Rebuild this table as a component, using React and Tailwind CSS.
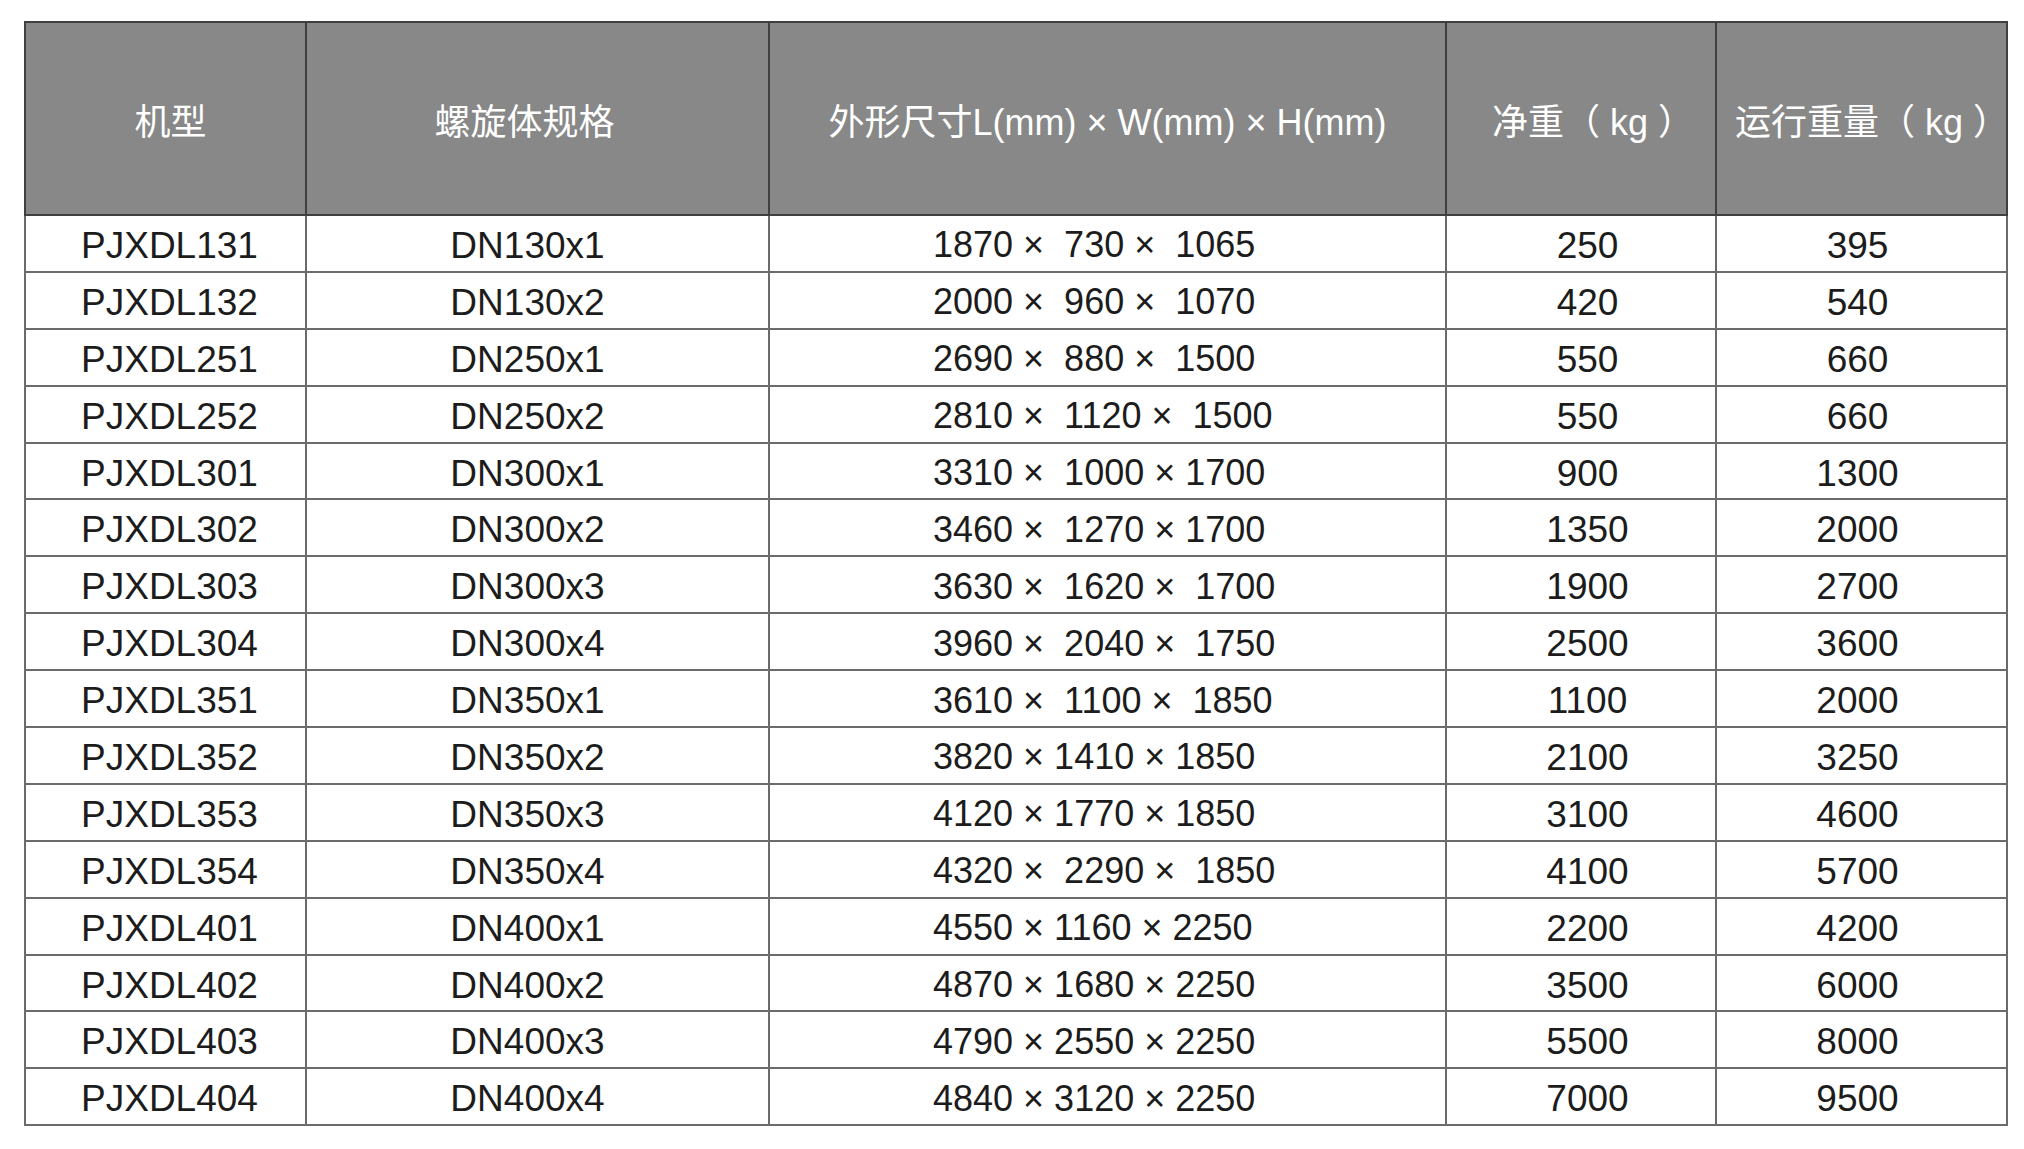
const rows = [
  ['PJXDL131', 'DN130x1', '1870 ×  730 ×  1065', '250', '395'],
  ['PJXDL132', 'DN130x2', '2000 ×  960 ×  1070', '420', '540'],
  ['PJXDL251', 'DN250x1', '2690 ×  880 ×  1500', '550', '660'],
  ['PJXDL252', 'DN250x2', '2810 ×  1120 ×  1500', '550', '660'],
  ['PJXDL301', 'DN300x1', '3310 ×  1000 × 1700', '900', '1300'],
  ['PJXDL302', 'DN300x2', '3460 ×  1270 × 1700', '1350', '2000'],
  ['PJXDL303', 'DN300x3', '3630 ×  1620 ×  1700', '1900', '2700'],
  ['PJXDL304', 'DN300x4', '3960 ×  2040 ×  1750', '2500', '3600'],
  ['PJXDL351', 'DN350x1', '3610 ×  1100 ×  1850', '1100', '2000'],
  ['PJXDL352', 'DN350x2', '3820 × 1410 × 1850', '2100', '3250'],
  ['PJXDL353', 'DN350x3', '4120 × 1770 × 1850', '3100', '4600'],
  ['PJXDL354', 'DN350x4', '4320 ×  2290 ×  1850', '4100', '5700'],
  ['PJXDL401', 'DN400x1', '4550 × 1160 × 2250', '2200', '4200'],
  ['PJXDL402', 'DN400x2', '4870 × 1680 × 2250', '3500', '6000'],
  ['PJXDL403', 'DN400x3', '4790 × 2550 × 2250', '5500', '8000'],
  ['PJXDL404', 'DN400x4', '4840 × 3120 × 2250', '7000', '9500'],
];

const App = () => {
  return (
    <div className="min-h-[1149px] bg-white pt-[21px] pl-[24px] font-['Liberation_Sans','Noto_Sans_CJK_SC',sans-serif]">
      <table className="table-fixed border-collapse w-[1982px]">
        <colgroup>
          <col className="w-[281px]" />
          <col className="w-[463px]" />
          <col className="w-[677px]" />
          <col className="w-[270px]" />
          <col className="w-[291px]" />
        </colgroup>
        <thead>
          <tr className="h-[193px] bg-[#878887] text-white text-[36px]">
            <th className="border-2 border-[#3f3f3f] font-normal pt-2 pl-[10px]">机型</th>
            <th className="border-2 border-[#3f3f3f] font-normal pt-2 pr-[26px]">螺旋体规格</th>
            <th className="border-2 border-[#3f3f3f] font-normal pt-2 whitespace-nowrap">
              外形尺寸L(mm) × W(mm) × H(mm)
            </th>
            <th className="border-2 border-[#3f3f3f] font-normal pt-2 pl-[24px] whitespace-pre">净重（ kg ）</th>
            <th className="border-2 border-[#3f3f3f] font-normal pt-2 pl-[18px] whitespace-pre">运行重量（ kg ）</th>
          </tr>
        </thead>
        <tbody>
          {rows.map((r) => (
            <tr key={r[0]} className="h-[56.9px] text-[#1c1c1c] leading-none">
              <td className="border-2 border-[#6b6b6b] text-center text-[37px] pt-1 pl-[8px]">{r[0]}</td>
              <td className="border-2 border-[#6b6b6b] text-center text-[37px] pt-1 pr-[20px]">{r[1]}</td>
              <td className="border-2 border-[#6b6b6b] text-[36px] pl-[163px] pt-1 whitespace-pre">{r[2]}</td>
              <td className="border-2 border-[#6b6b6b] text-center text-[37px] pt-1 pl-[13px]">{r[3]}</td>
              <td className="border-2 border-[#6b6b6b] text-center text-[37px] pt-1 pr-[8px]">{r[4]}</td>
            </tr>
          ))}
        </tbody>
      </table>
    </div>
  );
};

export default App;
